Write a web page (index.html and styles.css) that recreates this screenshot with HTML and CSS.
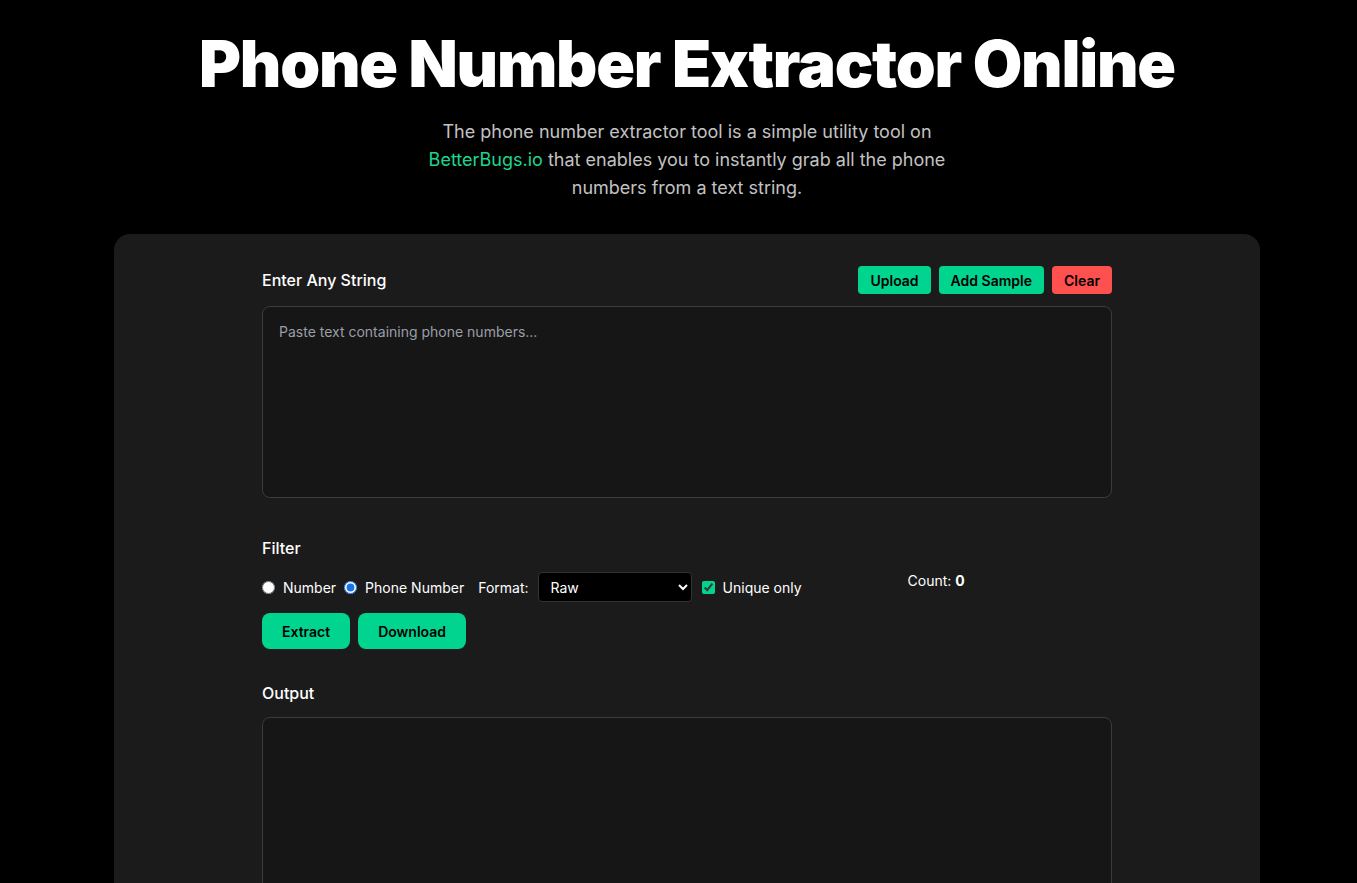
FILE: index.html
```html
<!DOCTYPE html>
<html lang="en">
<head>
  <meta charset="UTF-8">
  <meta name="viewport" content="width=device-width, initial-scale=1.0">
  <title>Phone Number Extractor Online</title>
  <link rel="stylesheet" href="styles.css">
</head>
<body>

  <header class="hero">
    <h1>Phone Number Extractor Online</h1>
    <p class="intro">The phone number extractor tool is a simple utility tool on <a href="#">BetterBugs.io</a> that enables you to instantly grab all the phone numbers from a text string.</p>
  </header>

  <main class="tool-card">
    <div class="tool-inner">
      <div class="section-head">
        <label for="input_text">Enter Any String</label>
        <div class="actions">
          <button class="btn-small">Upload</button>
          <button class="btn-small">Add Sample</button>
          <button class="btn-small danger">Clear</button>
        </div>
      </div>
      <textarea id="input_text" class="text-box input-box" placeholder="Paste text containing phone numbers..."></textarea>

      <div class="filter">
        <div class="filter-title">Filter</div>
        <div class="filter-row">
          <div class="options">
            <label class="opt"><input type="radio" name="mode"> Number</label>
            <label class="opt"><input type="radio" name="mode" checked> Phone Number</label>
            <label class="opt format">Format:
              <select>
                <option>Raw</option>
                <option>E.164</option>
                <option>International</option>
              </select>
            </label>
            <label class="opt unique"><input type="checkbox" checked> Unique only</label>
          </div>
          <div class="count">Count: <b>0</b></div>
        </div>
        <div class="run-row">
          <button class="btn">Extract</button>
          <button class="btn">Download</button>
        </div>
      </div>

      <div class="section-head output-head">
        <label for="output_text">Output</label>
      </div>
      <textarea id="output_text" class="text-box output-box" readonly></textarea>
    </div>
  </main>

</body>
</html>
```

FILE: styles.css
```css
/* Page */
body {
  font-family: 'Inter', 'Liberation Sans', sans-serif;
  background: #000;
  color: #fff;
  margin: 0;
  padding: 0 0 0 17px;
}
/* Header */
.hero {
  text-align: center;
  padding-top: 24px;
}
h1 {
  font-size: 64px;
  font-weight: 900;
  letter-spacing: -1.2px;
  margin: 0;
  line-height: 80px;
}
.intro {
  width: 540px;
  margin: 14px auto 0;
  font-size: 18px;
  line-height: 28px;
  color: #c2c2c2;
}
.intro a {
  color: #1ed68f;
  text-decoration: none;
}
/* Tool Card */
.tool-card {
  margin: 32px 97px 0 97px;
  background: #1b1b1b;
  border-radius: 16px 16px 0 0;
  padding: 32px 0 40px;
}
.tool-inner {
  width: 850px;
  margin-left: 148px;
}
.section-head {
  display: flex;
  justify-content: space-between;
  align-items: center;
  margin-bottom: 12px;
}
.section-head label {
  font-size: 16px;
  font-weight: 500;
}
.output-head {
  margin-bottom: 14px;
}
.actions {
  display: flex;
  gap: 8px;
}
.btn-small {
  font-family: inherit;
  font-size: 14px;
  font-weight: 600;
  color: #000;
  background: #00d48f;
  border: none;
  border-radius: 4px;
  height: 28px;
  padding: 0 12px;
}
.btn-small.danger {
  background: #ff5050;
}
.text-box {
  display: block;
  box-sizing: border-box;
  width: 100%;
  background: #161616;
  border: 1px solid #3c3c3c;
  border-radius: 8px;
  color: #ddd;
  font-family: inherit;
  font-size: 14px;
  padding: 16px;
  resize: none;
}
.text-box::placeholder {
  color: #9a9ea6;
}
.input-box {
  height: 192px;
}
.output-box {
  height: 192px;
}
/* Filter */
.filter {
  margin-top: 40px;
  margin-bottom: 34px;
}
.filter-title {
  font-size: 16px;
  font-weight: 500;
  margin-bottom: 14px;
}
.filter-row {
  display: flex;
  align-items: flex-start;
}
.options {
  display: flex;
  align-items: center;
  gap: 8px;
  font-size: 14px;
}
.opt {
  display: flex;
  align-items: center;
  gap: 8px;
}
.opt input {
  margin: 0;
  accent-color: #00d48f;
}
.opt input[type="radio"] {
  accent-color: #1a73e8;
}
.format {
  gap: 9px;
  margin-left: 6px;
}
.unique {
  margin-left: 2px;
}
.format select {
  width: 154px;
  height: 30px;
  background: #000;
  color: #fff;
  border: 1px solid #333;
  border-radius: 4px;
  font-family: inherit;
  font-size: 14px;
  padding: 0 8px;
}
.count {
  margin-left: 106px;
  font-size: 14px;
}
.count b {
  font-weight: 700;
}
.run-row {
  display: flex;
  gap: 8px;
  margin-top: 11px;
}
.btn {
  font-family: inherit;
  font-size: 14px;
  font-weight: 600;
  color: #000;
  background: #00d48f;
  border: none;
  border-radius: 8px;
  height: 36px;
  padding: 0 20px;
}
```
